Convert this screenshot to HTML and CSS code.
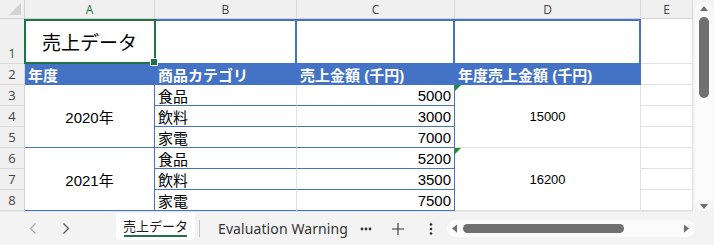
FILE: index.html
```html
<!DOCTYPE html>
<html lang="ja">
<head>
    <meta charset="UTF-8">
    <meta name="viewport" content="width=device-width, initial-scale=1.0">
    <title>売上データ</title>
    <link rel="stylesheet" href="styles.css">
</head>
<body>
    <div class="app">
        <div class="main">
            <div class="sheet">
                <!-- column headers -->
                <div class="corner"></div>
                <div class="colh sel">A</div>
                <div class="colh">B</div>
                <div class="colh">C</div>
                <div class="colh">D</div>
                <div class="colh">E</div>

                <!-- row 1 -->
                <div class="rowh sel r1">1</div>
                <div class="cell title">売上データ</div>
                <div class="cell box"></div>
                <div class="cell box"></div>
                <div class="cell box"></div>
                <div class="cell"></div>

                <!-- row 2 -->
                <div class="rowh">2</div>
                <div class="cell hd">年度</div>
                <div class="cell hd">商品カテゴリ</div>
                <div class="cell hd">売上金額 (千円)</div>
                <div class="cell hd">年度売上金額 (千円)</div>
                <div class="cell"></div>

                <!-- 2020 -->
                <div class="rowh">3</div>
                <div class="cell year">2020年</div>
                <div class="cell cat">食品</div>
                <div class="cell amt">5000</div>
                <div class="cell total flag">15000</div>
                <div class="cell"></div>
                <div class="rowh">4</div>
                <div class="cell cat">飲料</div>
                <div class="cell amt">3000</div>
                <div class="cell"></div>
                <div class="rowh">5</div>
                <div class="cell cat">家電</div>
                <div class="cell amt">7000</div>
                <div class="cell"></div>

                <!-- 2021 -->
                <div class="rowh">6</div>
                <div class="cell year">2021年</div>
                <div class="cell cat">食品</div>
                <div class="cell amt">5200</div>
                <div class="cell total flag">16200</div>
                <div class="cell"></div>
                <div class="rowh">7</div>
                <div class="cell cat">飲料</div>
                <div class="cell amt">3500</div>
                <div class="cell"></div>
                <div class="rowh">8</div>
                <div class="cell cat">家電</div>
                <div class="cell amt">7500</div>
                <div class="cell"></div>
            </div>

            <div class="vscroll">
                <svg width="18" height="209" viewBox="0 0 18 209">
                    <rect x="0" y="0" width="18" height="209" rx="9" fill="#fbfbfb"/>
                    <path d="M5 9 L13 9 L9 4 Z" fill="#6e6e6e"/>
                    <rect x="4" y="15" width="10" height="81" rx="5" fill="#707070"/>
                    <path d="M5 202 L13 202 L9 207 Z" fill="#6e6e6e"/>
                </svg>
            </div>
        </div>

        <div class="tabbar">
            <div class="nav">
                <span class="navbtn">
                    <svg width="8" height="11" viewBox="0 0 8 11"><path d="M6.5 0.5 L1.5 5.5 L6.5 10.5" fill="none" stroke="#a8a8a8" stroke-width="1.2"/></svg>
                </span>
                <span class="navbtn">
                    <svg width="8" height="11" viewBox="0 0 8 11"><path d="M1.5 0.5 L6.5 5.5 L1.5 10.5" fill="none" stroke="#555" stroke-width="1.2"/></svg>
                </span>
            </div>
            <div class="tab active">売上データ</div>
            <div class="sep"></div>
            <div class="tab other">Evaluation Warning</div>
            <span class="icon dots">
                <svg width="12" height="4" viewBox="0 0 12 4"><circle cx="2" cy="2" r="1.4" fill="#333"/><circle cx="6" cy="2" r="1.4" fill="#333"/><circle cx="10" cy="2" r="1.4" fill="#333"/></svg>
            </span>
            <span class="icon plus">
                <svg width="12" height="12" viewBox="0 0 12 12"><path d="M6 0 V12 M0 6 H12" stroke="#333" stroke-width="1.1"/></svg>
            </span>
            <span class="icon kebab">
                <svg width="4" height="12" viewBox="0 0 4 12"><circle cx="2" cy="1.5" r="1.3" fill="#333"/><circle cx="2" cy="6" r="1.3" fill="#333"/><circle cx="2" cy="10.5" r="1.3" fill="#333"/></svg>
            </span>
            <div class="hscroll">
                <svg width="248" height="17" viewBox="0 0 248 17">
                    <rect x="0" y="0" width="248" height="17" rx="8.5" fill="#fbfbfb"/>
                    <path d="M10 4.5 L10 12.5 L5 8.5 Z" fill="#6e6e6e"/>
                    <rect x="16" y="4" width="161" height="9" rx="4.5" fill="#707070"/>
                    <path d="M237 4.5 L237 12.5 L242 8.5 Z" fill="#6e6e6e"/>
                </svg>
            </div>
        </div>
    </div>
</body>
</html>
```

FILE: styles.css
```css
* {
    box-sizing: border-box;
}
body {
    margin: 0;
    background-color: #ffffff;
    font-family: "Liberation Sans", "Noto Sans CJK JP", sans-serif;
    color: #000000;
    overflow: hidden;
}
.app {
    width: 714px;
    height: 245px;
    display: flex;
    flex-direction: column;
}
.main {
    display: flex;
    height: 212px;
    background-color: #f3f3f3;
}

/* the grid of cells */
.sheet {
    display: grid;
    grid-template-columns: 25px 130px 142px 158px 186px 52px;
    grid-template-rows: 19px 45px repeat(7, 21px);
    width: 693px;
    height: 212px;
    background-color: #ffffff;
    border-bottom: 1px solid #e6e6e6;
}
.corner {
    background-color: #f0f0f0;
    border-right: 1px solid #d4d4d4;
    border-bottom: 1px solid #d4d4d4;
    position: relative;
}
.corner::after {
    content: "";
    position: absolute;
    right: 3px;
    bottom: 3px;
    width: 12px;
    height: 12px;
    background-color: #d2d2d2;
    clip-path: polygon(100% 0, 100% 100%, 0 100%);
}
.colh {
    background-color: #f0f0f0;
    border-right: 1px solid #d8d8d8;
    border-bottom: 1px solid #d4d4d4;
    display: flex;
    align-items: center;
    justify-content: center;
    font-family: "Open Sans", sans-serif;
    font-size: 12px;
    color: #444444;
}
.rowh {
    background-color: #f0f0f0;
    border-right: 1px solid #d4d4d4;
    border-bottom: 1px solid #dcdcdc;
    display: flex;
    align-items: center;
    justify-content: center;
    font-family: "Open Sans", sans-serif;
    font-size: 13px;
    color: #444444;
}
.rowh.r1 {
    align-items: flex-end;
    padding-bottom: 1px;
}
.sel {
    color: #1e7145; /* selected header */
}

.cell {
    border-right: 1px solid #e1e1e1;
    border-bottom: 1px solid #e1e1e1;
    display: flex;
    align-items: center;
    padding: 0 2px;
    font-size: 15px;
    white-space: nowrap;
    position: relative;
}
.title {
    justify-content: center;
    font-family: "Noto Sans CJK JP", sans-serif;
    font-size: 19px;
    padding-top: 1px;
}
/* selection frame and fill handle on A1 */
.title::before {
    content: "";
    position: absolute;
    top: 0;
    left: -1px;
    right: -2px;
    bottom: -1px;
    border: 2px solid #217346;
    z-index: 2;
}
.title::after {
    content: "";
    position: absolute;
    right: -4px;
    bottom: -3px;
    width: 6px;
    height: 6px;
    background-color: #217346;
    border: 1px solid #ffffff;
    z-index: 3;
}
.box {
    border-top: 2px solid #4472c4;
    border-right: 2px solid #4472c4;
    border-bottom-color: #4472c4;
}
.hd {
    background-color: #4472c4;
    border-right-color: #4472c4;
    border-bottom-color: #4472c4;
    color: #ffffff;
    font-weight: bold;
    padding-left: 3px;
}
.year {
    grid-row: span 3;
    justify-content: center;
    border-right-color: #4472c4;
    border-bottom-color: #4472c4;
    font-size: 15px;
}
.cat {
    border-bottom-color: #4472c4;
    padding-left: 3px;
}
.amt {
    justify-content: flex-end;
    border-right-color: #4472c4;
    border-bottom-color: #4472c4;
    padding-right: 3px;
}
.total {
    grid-row: span 3;
    justify-content: center;
    font-size: 13px;
}
.flag::before {
    content: "";
    position: absolute;
    top: 0;
    left: 0;
    width: 6px;
    height: 6px;
    background-color: #1e8a2e;
    clip-path: polygon(0 0, 100% 0, 0 100%);
}

.vscroll {
    width: 21px;
    padding: 2px 1px 1px 2px;
}
.vscroll svg {
    display: block;
}

/* sheet tabs */
.tabbar {
    height: 33px;
    display: flex;
    align-items: center;
    background-color: #f3f3f3;
    font-family: "Noto Sans", "Noto Sans CJK JP", sans-serif;
    color: #333333;
}
.nav {
    display: flex;
    padding-left: 16px;
}
.navbtn {
    width: 33px;
    display: flex;
    justify-content: center;
}
.tab {
    font-size: 14px;
    white-space: nowrap;
}
.tab.active {
    align-self: flex-start;
    margin-top: 1px;
    margin-left: 34px;
    width: 79px;
    height: 27px;
    background-color: #ffffff;
    border-radius: 0 0 5px 5px;
    display: flex;
    justify-content: center;
    align-items: center;
    font-family: "Noto Sans CJK JP", sans-serif;
    font-size: 13px;
    color: #1a1a1a;
    position: relative;
    padding-bottom: 2px;
}
.tab.active::after {
    content: "";
    position: absolute;
    left: 8px;
    right: 8px;
    bottom: 3px;
    height: 2px;
    background-color: #217346;
}
.sep {
    width: 1px;
    height: 17px;
    margin-left: 4px;
    background-color: #c6c6c6;
}
.tab.other {
    width: 142px;
    margin-left: 18px;
    font-size: 14px;
    letter-spacing: 0.1px;
    color: #333333;
}
.icon {
    display: flex;
    align-items: center;
}
.plus {
    margin-left: 20px;
}
.kebab {
    margin-left: 25px;
}
.hscroll {
    margin-left: 14px;
    display: flex;
}
```
